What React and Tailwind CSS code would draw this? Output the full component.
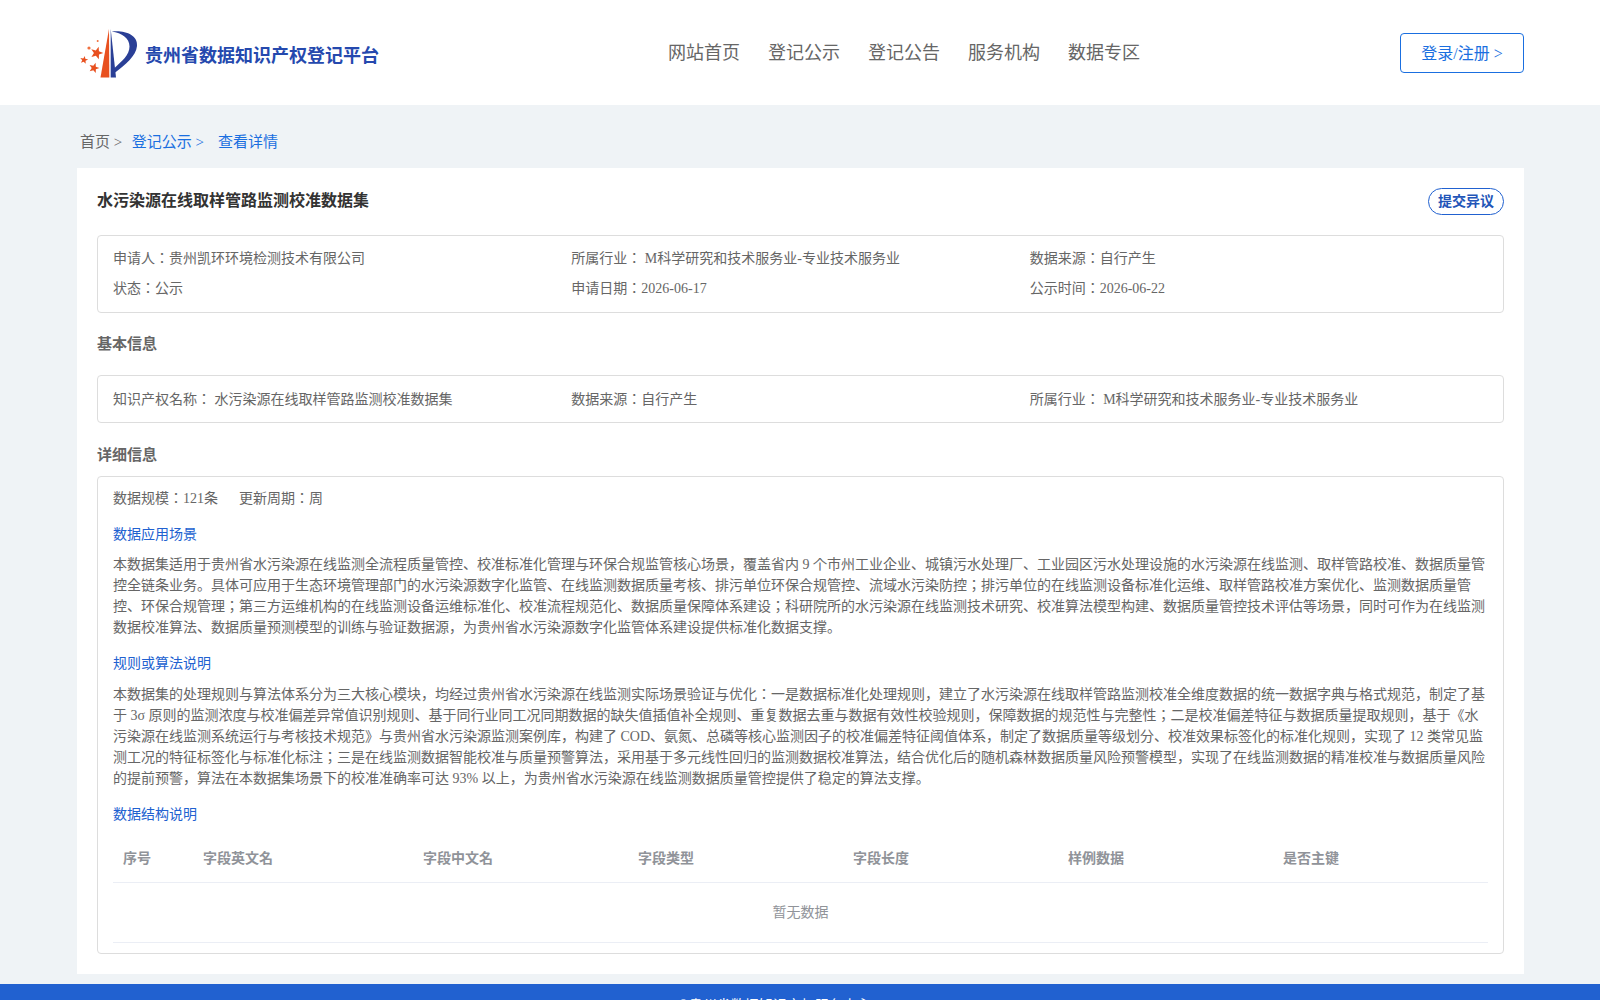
const serif = "font-['Liberation_Serif','Noto_Sans_CJK_JP',serif]";

const navItems = ["网站首页", "登记公示", "登记公告", "服务机构", "数据专区"];
const columns = ["字段英文名", "字段中文名", "字段类型", "字段长度", "样例数据", "是否主键"];

// five pointed star, centre + radius
function starPoints(cx, cy, r, rot = 0) {
  const pts = [];
  for (let i = 0; i < 10; i++) {
    const rad = i % 2 === 0 ? r : r * 0.42;
    const a = -Math.PI / 2 + (i * Math.PI) / 5 + rot;
    pts.push(`${(cx + rad * Math.cos(a)).toFixed(2)},${(cy + rad * Math.sin(a)).toFixed(2)}`);
  }
  return pts.join(" ");
}

function Logo() {
  return (
    <svg width="60" height="56" viewBox="0 0 60 56" className="shrink-0">
      <path d="M29 2 L29.3 50.5 L20.5 50.5 Z" fill="#e8501f" />
      <path d="M30.7 2 L30.7 50.5 L36 50.5 Z" fill="#2a3f96" />
      <path d="M31.7 4.5 C45 3 58 8 57 19 C56 29 46 37 34.5 46 L34 41.5 C42 34 49.5 28 49.5 19.5 C49.5 11 42 6 31.7 4.5 Z" fill="#2a3f96" />
      <polygon points={starPoints(16.7, 26, 6.6, 0.3)} fill="#e8501f" />
      <polygon points={starPoints(4, 33, 4.2, 0.2)} fill="#e8501f" />
      <polygon points={starPoints(14, 41, 5.4, 0.3)} fill="#e8501f" />
      <circle cx="9" cy="21" r="1.6" fill="#f0703f" />
      <circle cx="17.7" cy="14" r="1" fill="#f0703f" />
    </svg>
  );
}

function InfoCell({ children }) {
  return <div>{children}</div>;
}

function SubTitle({ children, className }) {
  return <div className={`text-[#2161d0] leading-[21px] ${className}`}>{children}</div>;
}

export default function App() {
  return (
    <div className={`h-screen overflow-hidden bg-[#eff3f6] text-sm text-[#666] ${serif}`}>
      <header className="h-[105px] bg-white pl-[80px] pr-[76px] flex items-center justify-between">
        <div className="w-[320px] flex items-center gap-[5px] pt-[4px]">
          <Logo />
          <span className="pt-[5px] text-[18px] font-bold text-[#2549ae] whitespace-nowrap">贵州省数据知识产权登记平台</span>
        </div>
        <nav className="flex gap-[28px] text-[18px] text-[#666] ml-[8px] pt-[2px]">
          {navItems.map((item) => (
            <a key={item}>{item}</a>
          ))}
        </nav>
        <button className="w-[124px] h-[40px] border border-[#1a6fe0] rounded text-base text-[#1a6fe0] bg-white pt-[2px]">
          登录/注册 &gt;
        </button>
      </header>

      <main className="pl-[77px] pr-[76px] pt-[25px]">
        <div className="flex h-[38px] items-start pl-[3px] text-[15px] leading-[24px]">
          <span className="mr-[9.5px]">首页 &gt;</span>
          <span className="mr-[14px] text-[#1a6fe0]">登记公示 &gt;</span>
          <span className="text-[#1a6fe0]">查看详情</span>
        </div>

        <div className="h-[806px] bg-white px-[20px] pt-[20px]">
          <div className="flex justify-between h-[47px]">
            <h1 className="text-base font-bold text-[#333] leading-[24px] pt-[1px]">水污染源在线取样管路监测校准数据集</h1>
            <button className="h-[27px] w-[76px] border border-[#2161d0] rounded-[14px] font-bold text-[#2255b8] bg-white">
              提交异议
            </button>
          </div>

          <div className="border border-[#ddd] rounded grid grid-cols-3 gap-y-[8px] px-[15px] pt-[12px] pb-[12px] h-[78px] leading-[21px]">
            <InfoCell>申请人：贵州凯环环境检测技术有限公司</InfoCell>
            <InfoCell>所属行业： M科学研究和技术服务业-专业技术服务业</InfoCell>
            <InfoCell>数据来源：自行产生</InfoCell>
            <InfoCell>状态：公示</InfoCell>
            <InfoCell>申请日期：2026-06-17</InfoCell>
            <InfoCell>公示时间：2026-06-22</InfoCell>
          </div>

          <div className="text-[15px] font-bold leading-[22px] mt-[20px] mb-[20px]">基本信息</div>

          <div className="border border-[#ddd] rounded grid grid-cols-3 px-[15px] items-center h-[48px] leading-[21px]">
            <InfoCell>知识产权名称： 水污染源在线取样管路监测校准数据集</InfoCell>
            <InfoCell>数据来源：自行产生</InfoCell>
            <InfoCell>所属行业： M科学研究和技术服务业-专业技术服务业</InfoCell>
          </div>

          <div className="text-[15px] font-bold leading-[22px] mt-[21px] mb-[10px]">详细信息</div>

          <div className="border border-[#ddd] rounded h-[478px] px-[15px] pt-[11px]">
            <div className="flex gap-[21px] leading-[21px]">
              <span>数据规模：121条</span>
              <span>更新周期：周</span>
            </div>
            <SubTitle className="mt-[15px]">数据应用场景</SubTitle>
            <p className="mt-[9px] leading-[21px]">
              本数据集适用于贵州省水污染源在线监测全流程质量管控、校准标准化管理与环保合规监管核心场景，覆盖省内 9 个市州工业企业、城镇污水处理厂、工业园区污水处理设施的水污染源在线监测、取样管路校准、数据质量管控全链条业务。具体可应用于生态环境管理部门的水污染源数字化监管、在线监测数据质量考核、排污单位环保合规管控、流域水污染防控；排污单位的在线监测设备标准化运维、取样管路校准方案优化、监测数据质量管控、环保合规管理；第三方运维机构的在线监测设备运维标准化、校准流程规范化、数据质量保障体系建设；科研院所的水污染源在线监测技术研究、校准算法模型构建、数据质量管控技术评估等场景，同时可作为在线监测数据校准算法、数据质量预测模型的训练与验证数据源，为贵州省水污染源数字化监管体系建设提供标准化数据支撑。
            </p>
            <SubTitle className="mt-[15px]">规则或算法说明</SubTitle>
            <p className="mt-[10px] leading-[21px]">
              本数据集的处理规则与算法体系分为三大核心模块，均经过贵州省水污染源在线监测实际场景验证与优化：一是数据标准化处理规则，建立了水污染源在线取样管路监测校准全维度数据的统一数据字典与格式规范，制定了基于 3σ 原则的监测浓度与校准偏差异常值识别规则、基于同行业同工况同期数据的缺失值插值补全规则、重复数据去重与数据有效性校验规则，保障数据的规范性与完整性；二是校准偏差特征与数据质量提取规则，基于《水污染源在线监测系统运行与考核技术规范》与贵州省水污染源监测案例库，构建了 COD、氨氮、总磷等核心监测因子的校准偏差特征阈值体系，制定了数据质量等级划分、校准效果标签化的标准化规则，实现了 12 类常见监测工况的特征标签化与标准化标注；三是在线监测数据智能校准与质量预警算法，采用基于多元线性回归的监测数据校准算法，结合优化后的随机森林数据质量风险预警模型，实现了在线监测数据的精准校准与数据质量风险的提前预警，算法在本数据集场景下的校准准确率可达 93% 以上，为贵州省水污染源在线监测数据质量管控提供了稳定的算法支撑。
            </p>
            <SubTitle className="mt-[15px]">数据结构说明</SubTitle>
            <table className="w-full table-fixed mt-[11px]">
              <thead>
                <tr className="h-[46px] border-b border-[#ebeef5] text-left text-[#909399] font-bold">
                  <th className="w-[80px] pl-[10px] pt-[1px] font-bold">序号</th>
                  <th className="w-[220px] pl-[10px] pt-[1px] font-bold">{columns[0]}</th>
                  {columns.slice(1).map((c) => (
                    <th key={c} className="pl-[10px] pt-[1px] font-bold">{c}</th>
                  ))}
                </tr>
              </thead>
              <tbody>
                <tr className="h-[60px] border-b border-[#ebeef5]">
                  <td colSpan={7} className="text-center text-[#909399] pt-[1px]">暂无数据</td>
                </tr>
              </tbody>
            </table>
          </div>
        </div>
      </main>

      <footer className="mt-[10px] bg-[#2161d0] text-white text-sm pl-[678px] pt-[12px] pb-[12px]">
        ©贵州省数据知识产权服务中心
      </footer>
    </div>
  );
}
